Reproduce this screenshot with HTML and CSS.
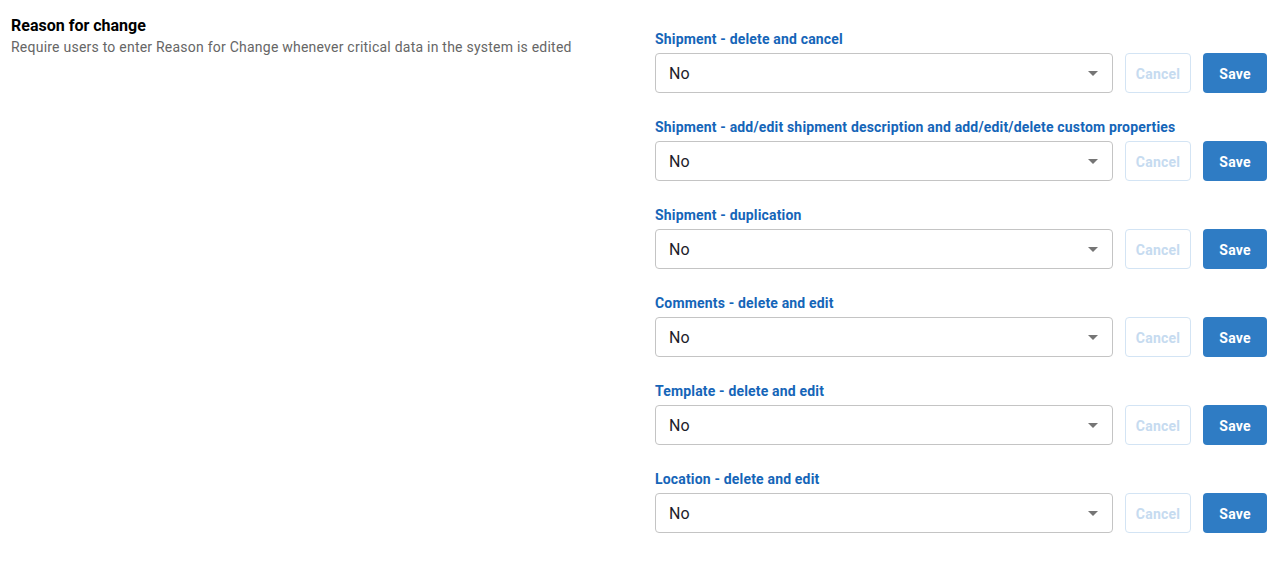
FILE: index.html
```html
<!DOCTYPE html>
<html>
<head>
<meta charset="utf-8">
<link rel="stylesheet" href="styles.css">
</head>
<body>
<div class="page">
  <div class="intro">
    <div class="title">Reason for change</div>
    <div class="subtitle">Require users to enter Reason for Change whenever critical data in the system is edited</div>
  </div>
  <div class="fields">
    <div class="field">
      <div class="label">Shipment - delete and cancel</div>
      <div class="row">
        <div class="select"><span>No</span><span class="caret"></span></div>
        <button class="btn cancel">Cancel</button>
        <button class="btn save">Save</button>
      </div>
    </div>
    <div class="field">
      <div class="label">Shipment - add/edit shipment description and add/edit/delete custom properties</div>
      <div class="row">
        <div class="select"><span>No</span><span class="caret"></span></div>
        <button class="btn cancel">Cancel</button>
        <button class="btn save">Save</button>
      </div>
    </div>
    <div class="field">
      <div class="label">Shipment - duplication</div>
      <div class="row">
        <div class="select"><span>No</span><span class="caret"></span></div>
        <button class="btn cancel">Cancel</button>
        <button class="btn save">Save</button>
      </div>
    </div>
    <div class="field">
      <div class="label">Comments - delete and edit</div>
      <div class="row">
        <div class="select"><span>No</span><span class="caret"></span></div>
        <button class="btn cancel">Cancel</button>
        <button class="btn save">Save</button>
      </div>
    </div>
    <div class="field">
      <div class="label">Template - delete and edit</div>
      <div class="row">
        <div class="select"><span>No</span><span class="caret"></span></div>
        <button class="btn cancel">Cancel</button>
        <button class="btn save">Save</button>
      </div>
    </div>
    <div class="field">
      <div class="label">Location - delete and edit</div>
      <div class="row">
        <div class="select"><span>No</span><span class="caret"></span></div>
        <button class="btn cancel">Cancel</button>
        <button class="btn save">Save</button>
      </div>
    </div>
  </div>
</div>
</body>
</html>
```

FILE: styles.css
```css
html, body {
  margin: 0;
  padding: 0;
  background: #ffffff;
  font-family: Roboto, "Liberation Sans", sans-serif;
}

.page {
  display: flex;
  padding: 16px 19px 0 11px;
}

.intro {
  flex: 1;
}

.title {
  font-size: 16px;
  font-weight: 700;
  line-height: 20px;
  color: #000000;
}

.subtitle {
  margin-top: 1px;
  font-size: 14px;
  line-height: 20px;
  letter-spacing: 0.23px;
  color: #666666;
}

.fields {
  width: 612px;
  padding-top: 15px;
}

.field {
  margin-bottom: 26px;
}

.label {
  font-size: 14px;
  font-weight: 700;
  line-height: 16px;
  letter-spacing: 0.17px;
  color: #1565b8;
  margin-bottom: 6px;
}

.row {
  display: flex;
  align-items: center;
}

.select {
  box-sizing: border-box;
  width: 458px;
  height: 40px;
  border: 1px solid #c4c4c4;
  border-radius: 4px;
  display: flex;
  align-items: center;
  justify-content: space-between;
  padding: 0 14px 0 13px;
  font-size: 16px;
  color: #1d1d2b;
}

.caret {
  width: 0;
  height: 0;
  border-left: 5px solid transparent;
  border-right: 5px solid transparent;
  border-top: 5px solid #757575;
}

.btn {
  box-sizing: border-box;
  height: 40px;
  border-radius: 4px;
  font-family: Roboto, "Liberation Sans", sans-serif;
  font-size: 14px;
  font-weight: 700;
  letter-spacing: 0.2px;
  padding: 1px 0 0;
}

.cancel {
  width: 66px;
  margin-left: 12px;
  background: #ffffff;
  border: 1px solid #d3e4f4;
  color: #c6dbf0;
}

.save {
  width: 64px;
  margin-left: 12px;
  background: #2f7cc4;
  border: none;
  color: #ffffff;
}
```
